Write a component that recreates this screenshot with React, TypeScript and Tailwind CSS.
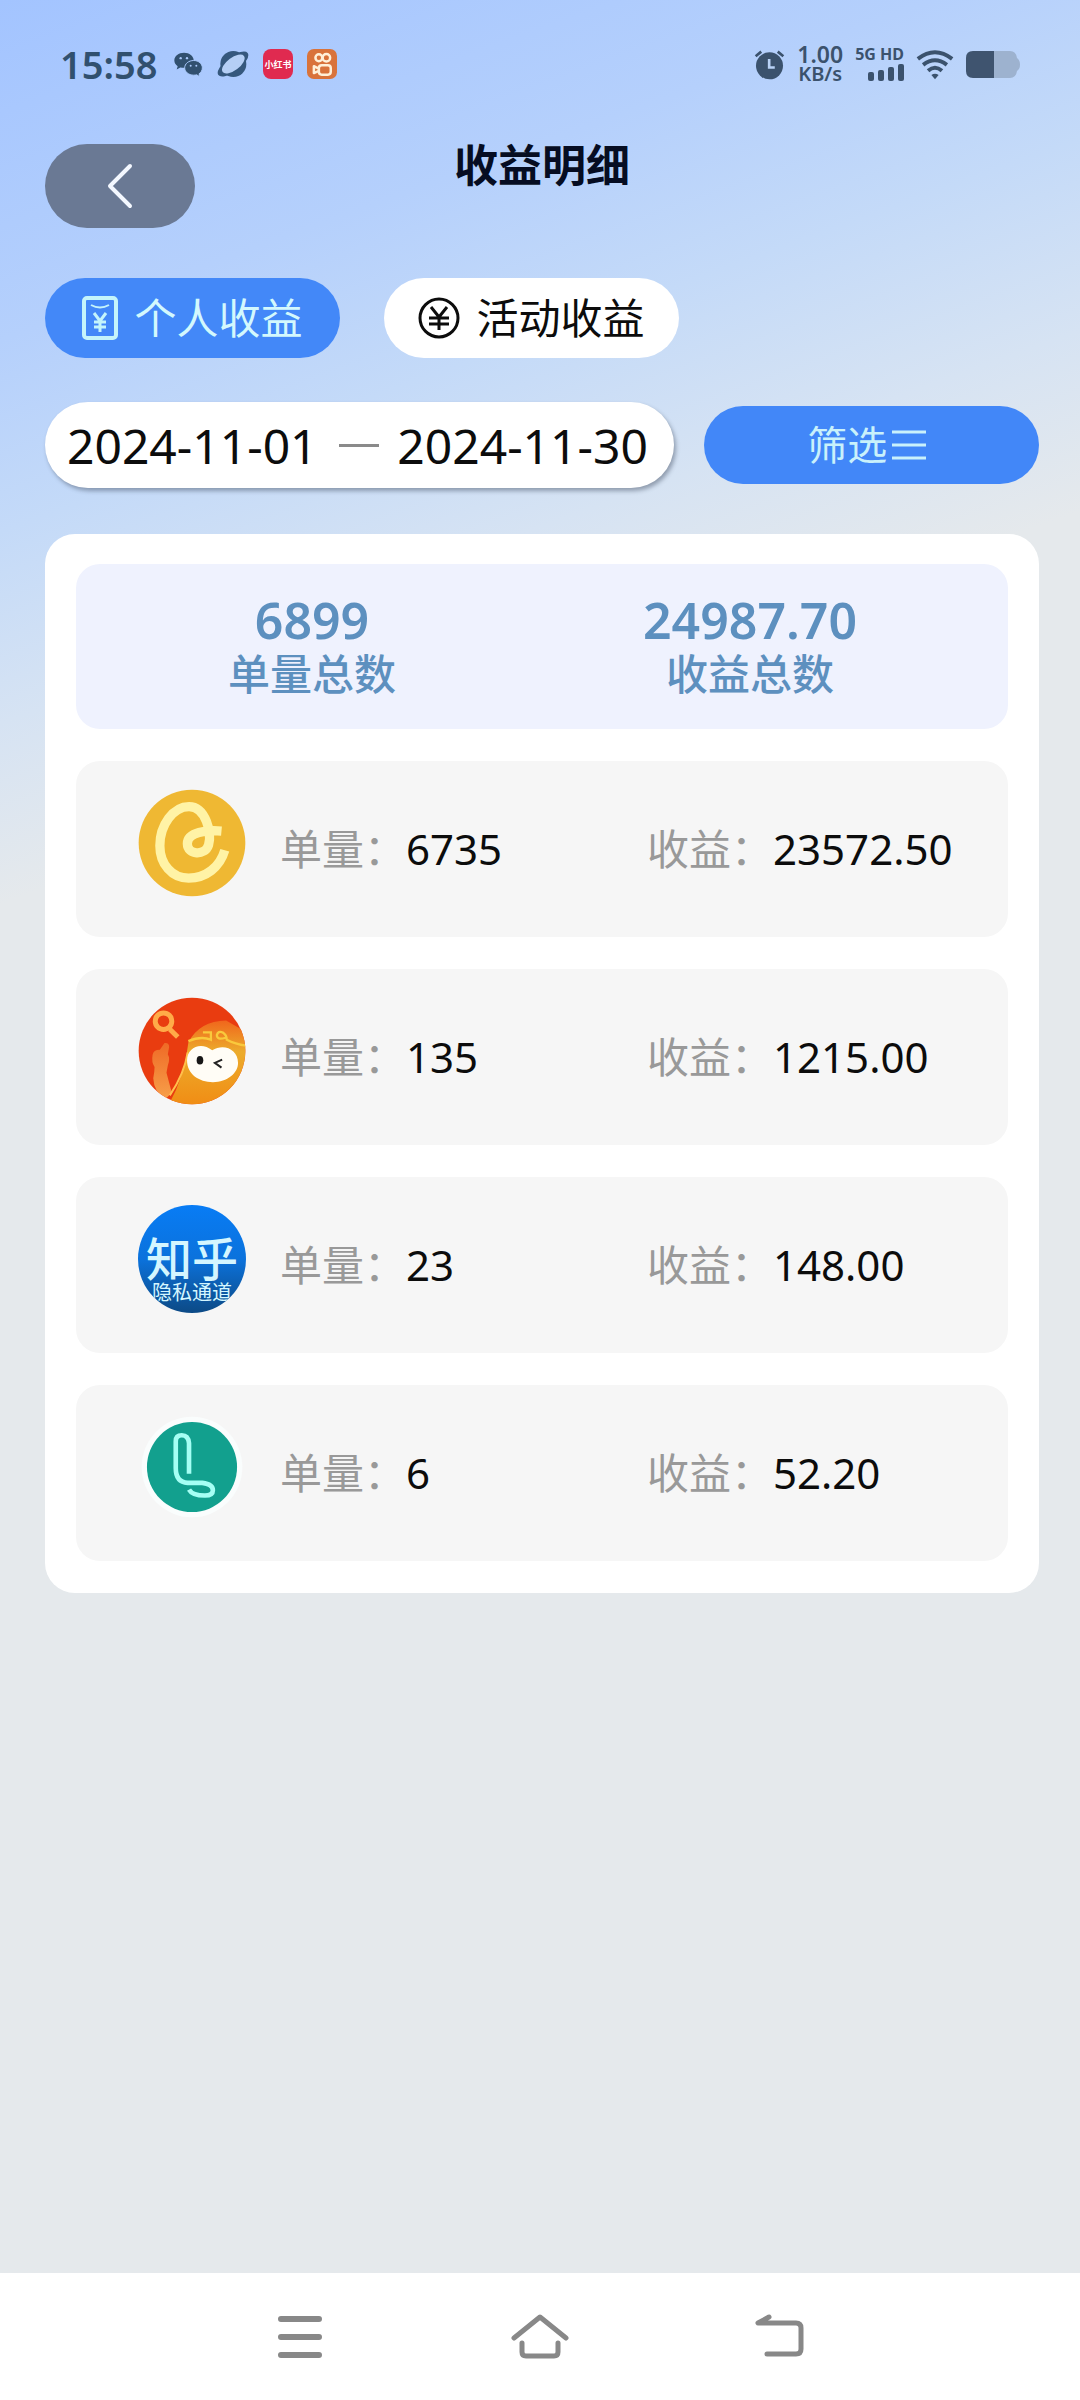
import type { ReactNode } from "react";

function WeChatIcon() {
  return (
    <svg viewBox="402 64 87 74" className="h-[25px] w-[29px]" aria-hidden="true">
      <path fill="#31506f" d="M432 66c-16 0-29 10-29 23 0 7 4 13 10 17l-3 10 11-6c4 1 7 1 11 1 16 0 29-9 29-22s-13-23-29-23z" />
      <path fill="#31506f" stroke="#a9c8fb" strokeWidth="3" d="M461 89c-15 0-27 10-27 22s12 22 27 22c3 0 6 0 9-1l10 6-3-9c6-4 10-10 10-18 0-12-11-22-26-22z" />
      <g fill="#a9c8fb">
        <circle cx="422" cy="82" r="3.5" />
        <circle cx="441" cy="82" r="3.5" />
        <circle cx="452" cy="105" r="3" />
        <circle cx="469" cy="105" r="3" />
      </g>
    </svg>
  );
}

function PlanetIcon() {
  return (
    <svg viewBox="531 60 96 84" className="h-[28px] w-[32px]" aria-hidden="true">
      <circle cx="580" cy="102" r="39" fill="#35587d" />
      <ellipse cx="579" cy="102" rx="55" ry="22" fill="#35587d" transform="rotate(-37 579 102)" />
      <ellipse cx="580" cy="102" rx="40" ry="19" fill="#b5cff5" transform="rotate(-37 580 102)" />
    </svg>
  );
}

function RedNoteIcon() {
  return (
    <span className="flex size-[30px] items-center justify-center rounded-lg bg-[#e02a50] text-[9px] leading-none font-bold text-white">
      小红书
    </span>
  );
}

function KuaishouIcon() {
  return (
    <svg viewBox="0 0 96 96" className="size-[30px]" aria-hidden="true">
      <rect width="96" height="96" rx="22" fill="#d9733b" />
      <g fill="none" stroke="#fff0d8" strokeWidth="8">
        <circle cx="38" cy="28" r="11" />
        <circle cx="62" cy="28" r="12" />
        <rect x="38" y="52" width="38" height="30" rx="9" />
        <path d="M36 62 22 55v22l14-6" strokeLinejoin="round" />
      </g>
    </svg>
  );
}

function AlarmIcon() {
  return (
    <svg viewBox="70 56 92 94" className="h-[31px] w-[31px]" aria-hidden="true">
      <circle cx="116" cy="107" r="41" fill="#3b526d" />
      <path d="M74 78 91 64M158 78 141 64" stroke="#3b526d" strokeWidth="8" />
      <path d="M115 86v26h17" fill="none" stroke="#b9d2f6" strokeWidth="8" />
    </svg>
  );
}

function SignalIcon() {
  return (
    <svg viewBox="0 0 36 17" className="h-[17px] w-9" aria-hidden="true" fill="#3b526d">
      <rect x="0" y="8" width="6" height="9" rx="2" />
      <rect x="10" y="6" width="6" height="11" rx="2" />
      <rect x="20" y="3" width="6" height="14" rx="2" />
      <rect x="30" y="0" width="6" height="17" rx="2" />
    </svg>
  );
}

function WifiIcon() {
  return (
    <svg viewBox="560 56 114 94" className="h-[31px] w-[38px]" aria-hidden="true">
      <g fill="none" stroke="#3b526d" strokeWidth="12">
        <path d="M565 86Q617 46 669 86" />
        <path d="M581 104Q617 76 653 104" />
        <path d="M596 122Q617 104 638 122" />
      </g>
      <path d="M606 135q11-8 22 0l-11 13z" fill="#3b526d" />
    </svg>
  );
}

function BatteryIcon() {
  return (
    <svg viewBox="0 0 54 27" className="h-[27px] w-[54px]" aria-hidden="true">
      <path d="M27 0h17q6 0 7 7 3 2 3 6.500t-3 6.500q-1 7-7 7H27z" fill="#9db2cf" />
      <path d="M28 0H7Q0 0 0 7v13q0 7 7 7h21z" fill="#3f546f" />
    </svg>
  );
}

function EnvelopeIcon() {
  return (
    <svg viewBox="0 0 36 44" className="h-11 w-9" aria-hidden="true" fill="none" stroke="#c4f4fb" strokeWidth="3">
      <rect x="2" y="2" width="32" height="40" rx="3" strokeWidth="4" />
      <path d="M9 9q9 5 18 0" strokeWidth="2" />
      <path d="m12 17 6 8 6-8M18 25v11M12 26h12M12 31h12" />
    </svg>
  );
}

function YuanIcon() {
  return (
    <svg viewBox="0 0 42 42" className="size-[42px]" aria-hidden="true" fill="none" stroke="#0c0c0c" strokeWidth="3">
      <circle cx="21" cy="21" r="19" />
      <path d="m13 10 8 10 8-10M21 20v13M11 21h20M11 27h20" />
    </svg>
  );
}

function CoinLogo() {
  return (
    <svg viewBox="55 57 324 326" className="size-[108px]" aria-hidden="true">
      <circle cx="217" cy="220" r="161" fill="#efb833" />
      <path
        d="M306 184C262 180 203 187 203 222c0 34 53 38 64 4 10-36-8-116-59-116-47 0-88 55-88 118 0 55 36 98 87 98 52 0 94-33 109-84"
        fill="none"
        stroke="#fff3a6"
        strokeWidth="28"
      />
    </svg>
  );
}

function MonkeyLogo() {
  return (
    <svg viewBox="55 53 324 326" className="size-[108px]" aria-hidden="true">
      <defs>
        <clipPath id="monkey-clip">
          <circle cx="217" cy="216" r="161" />
        </clipPath>
        <linearGradient id="monkey-hood" x1="0" y1="0" x2="0" y2="1">
          <stop offset="0" stopColor="#f0661c" />
          <stop offset="0.35" stopColor="#ecac2c" />
          <stop offset="1" stopColor="#f18a12" />
        </linearGradient>
        <linearGradient id="monkey-hand" x1="0" y1="0" x2="0" y2="1">
          <stop offset="0" stopColor="#ef6a26" />
          <stop offset="1" stopColor="#f7a04a" />
        </linearGradient>
      </defs>
      <g clipPath="url(#monkey-clip)">
        <rect x="50" y="50" width="340" height="340" fill="#e93c10" />
        <path d="M98 228q2-16 22-16l14-20q14-2 14 12l-4 22q8 14 0 34l-4 22 16 60-20 20q-34-24-36-64 4-20 4-34-10-14-6-36z" fill="url(#monkey-hand)" />
        <path d="M140 390q56-96 66-200Q240 125 320 124l70 40v230z" fill="url(#monkey-hood)" />
        <path d="M206 186q40-16 68-4v-22h-24M318 176q-26 8-26-8 4-14 18-8 12 8 12 22 26 14 60 18" fill="none" stroke="#f9c93c" strokeWidth="7" />
        <path d="M150 350q44-66 54-130" fill="none" stroke="#ffc04c" strokeWidth="6" />
        <circle cx="131" cy="126" r="25" fill="none" stroke="#ffab48" strokeWidth="15" />
        <path d="m150 150 24 24" stroke="#ffab48" strokeWidth="15" />
        <path d="M278 214c-34-28-76-8-76 30 0 42 36 66 78 66 44 0 76-28 76-58 0-42-44-60-78-38z" fill="#fffdf6" />
        <ellipse cx="241" cy="244" rx="10" ry="13" fill="#171717" />
        <path d="m308 242-22 10 20 14" fill="none" stroke="#222" strokeWidth="6" />
      </g>
    </svg>
  );
}

function ZhihuLogo() {
  return (
    <span className="flex size-[108px] flex-col items-center overflow-hidden rounded-full bg-linear-to-b from-[#087cf5] via-[#0b72dc] to-[#0c4a86] pt-[30px] text-[#d4f6ff]">
      <span className="text-[46px] leading-[46px] font-medium whitespace-nowrap">知乎</span>
      <span className="text-[20px] leading-6 whitespace-nowrap">隐私通道</span>
    </span>
  );
}

function LineLogo() {
  return (
    <svg viewBox="55 43 324 326" className="size-[108px]" aria-hidden="true">
      <circle cx="217" cy="206" r="152" fill="#fafdfd" />
      <circle cx="217" cy="206" r="136" fill="#12a08e" />
      <path
        d="M208 226V134q-2-24-22-24-18 0-18 18v82q0 42 36 44h44q32 4 32 22 0 16-24 16-38 0-48-18"
        fill="none"
        stroke="#a5fff4"
        strokeWidth="14"
      />
    </svg>
  );
}

function Field({ label, value }: { label: string; value: string }) {
  return (
    <div className="flex">
      <dt className="text-[#999999]">{label}：</dt>
      <dd className="text-[#0c0c0c]">{value}</dd>
    </div>
  );
}

const rows: { id: string; logo: ReactNode; count: string; income: string }[] = [
  { id: "coin", logo: <CoinLogo />, count: "6735", income: "23572.50" },
  { id: "monkey", logo: <MonkeyLogo />, count: "135", income: "1215.00" },
  { id: "zhihu", logo: <ZhihuLogo />, count: "23", income: "148.00" },
  { id: "line", logo: <LineLogo />, count: "6", income: "52.20" },
];

function StatusBar() {
  return (
    <div className="flex h-32 items-center justify-between px-[60px] text-[#31506f]">
      <div className="flex items-center gap-[14px]">
        <span className="w-[100px] text-[38px] leading-none font-semibold">15:58</span>
        <WeChatIcon />
        <PlanetIcon />
        <RedNoteIcon />
        <KuaishouIcon />
      </div>
      <div className="flex items-center gap-3 text-[#3b526d]">
        <AlarmIcon />
        <span className="flex flex-col items-center leading-5 font-semibold">
          <span className="text-[23px]">1.00</span>
          <span className="text-[20px]">KB/s</span>
        </span>
        <span className="flex flex-col items-end gap-[3px] text-[16px] leading-[14px] font-bold">
          <span>5G HD</span>
          <SignalIcon />
        </span>
        <WifiIcon />
        <BatteryIcon />
      </div>
    </div>
  );
}

export default function App() {
  return (
    <div className="flex min-h-screen flex-col bg-[#e5e9ec] bg-[linear-gradient(160deg,#a3c4ff_0px,#b5d0fc_320px,#c4daf8_500px,#d6e3f3_680px,#e5e9ec_850px)] font-['Noto_Sans','Noto_Sans_CJK_SC',sans-serif]">
      <StatusBar />

      <main className="flex flex-col pt-4 pr-[41px] pl-[45px]">
        <header className="grid grid-cols-[150px_1fr_150px] items-start">
          <button type="button" aria-label="返回" className="flex h-[84px] items-center justify-center rounded-full bg-[#6a7994]">
            <svg viewBox="0 0 26 46" className="h-[46px] w-[26px]" fill="none" stroke="#f4f8ff" strokeWidth="4" strokeLinecap="round" strokeLinejoin="round">
              <path d="M23 3 3 23l20 20" />
            </svg>
          </button>
          <h1 className="text-center text-[44px] leading-[42px] font-bold text-[#060d22]">收益明细</h1>
        </header>

        <div className="mt-[50px] flex gap-11">
          <button type="button" aria-pressed="true" className="flex h-20 w-[295px] items-center justify-center gap-4 rounded-full bg-[#4388f8] text-[42px] leading-none text-[#d3f8fd]">
            <EnvelopeIcon />
            个人收益
          </button>
          <button type="button" aria-pressed="false" className="flex h-20 w-[295px] items-center justify-center gap-4 rounded-full bg-white text-[42px] leading-none text-[#0c0c0c]">
            <YuanIcon />
            活动收益
          </button>
        </div>

        <div className="mt-11 grid grid-cols-[15fr_8fr] items-center gap-[30px]">
          <div className="flex h-[86px] items-center gap-[18px] rounded-full bg-white px-[22px] shadow-[2px_3px_4px_rgba(60,70,90,0.45)]">
            <input type="text" aria-label="开始日期" defaultValue="2024-11-01" className="w-0 flex-1 bg-transparent text-[48px] leading-none text-[#0c0c0c] outline-none" />
            <span className="h-[3px] w-10 bg-[#8a8a8a]" />
            <input type="text" aria-label="结束日期" defaultValue="2024-11-30" className="w-0 flex-1 bg-transparent text-[48px] leading-none text-[#0c0c0c] outline-none" />
          </div>
          <button type="button" className="flex h-[78px] items-center justify-center gap-1 rounded-full bg-[#4287f8] pr-2 text-[40px] leading-none text-[#c9f1fb]">
            筛选
            <svg viewBox="0 0 36 30" className="h-[30px] w-9" aria-hidden="true" stroke="#c9f1fb" strokeWidth="3">
              <path d="M1 2h34M1 15h34M1 28h34" />
            </svg>
          </button>
        </div>

        <section className="mt-[46px] flex flex-col gap-8 rounded-[30px] bg-white px-[31px] pt-[30px] pb-8">
          <dl className="grid h-[165px] grid-cols-[1fr_404px] content-center rounded-[24px] bg-[#eff2fe] pr-[56px] text-center leading-[54px] text-[#5d90bf]">
            <div className="flex flex-col-reverse">
              <dt className="text-[42px] font-medium">单量总数</dt>
              <dd className="text-[50px] font-semibold">6899</dd>
            </div>
            <div className="flex flex-col-reverse">
              <dt className="text-[42px] font-medium">收益总数</dt>
              <dd className="text-[50px] font-semibold">24987.70</dd>
            </div>
          </dl>

          <ul className="flex flex-col gap-8">
            {rows.map((row) => (
              <li key={row.id} className="flex h-44 items-center gap-[34px] rounded-[24px] bg-[#f6f6f6] pl-[62px]">
                <div className="shrink-0 pb-3">{row.logo}</div>
                <dl className="grid flex-1 grid-cols-[1fr_361px] text-[42px] leading-[60px]">
                  <Field label="单量" value={row.count} />
                  <Field label="收益" value={row.income} />
                </dl>
              </li>
            ))}
          </ul>
        </section>
      </main>

      <nav className="mt-auto grid h-[127px] grid-cols-3 items-center bg-white px-[180px]" aria-label="系统导航">
        <button type="button" aria-label="最近任务" className="flex justify-center">
          <svg viewBox="0 0 46 46" className="size-[46px]" stroke="#888888" strokeWidth="6" strokeLinecap="round">
            <path d="M4 5h38M4 23h38M4 41h38" />
          </svg>
        </button>
        <button type="button" aria-label="主屏幕" className="flex justify-center">
          <svg viewBox="0 0 58 46" className="h-[46px] w-[58px]" fill="none" stroke="#888888" strokeWidth="5" strokeLinecap="round" strokeLinejoin="round">
            <path d="M3 24 29 3l26 21M11 29v9q0 4 4 4h28q4 0 4-4v-9" />
          </svg>
        </button>
        <button type="button" aria-label="返回上一页" className="flex justify-center">
          <svg viewBox="0 0 50 46" className="h-[46px] w-[50px]" fill="none" stroke="#888888" strokeWidth="5" strokeLinecap="round" strokeLinejoin="round">
            <path d="M14 3 3 9h38q5 0 5 5v21q0 5-5 5H12" />
          </svg>
        </button>
      </nav>
    </div>
  );
}
